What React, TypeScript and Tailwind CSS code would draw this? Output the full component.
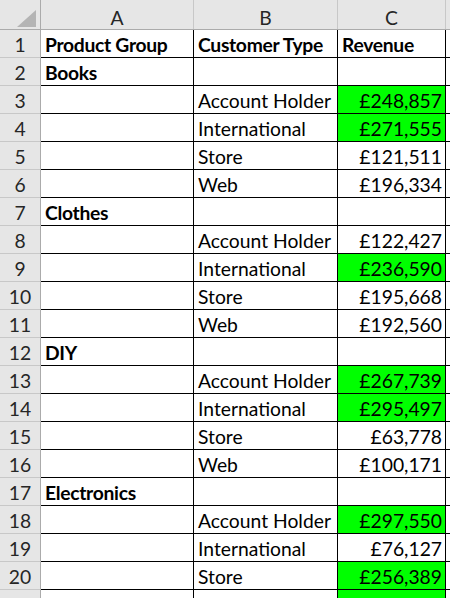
import React from "react";

type Row = {
  a?: string,
  b?: string,
  c?: string,
  hi?: boolean,
  bold?: boolean,
}

const rows: Row[] = [
  { a: "Product Group", b: "Customer Type", c: "Revenue", bold: true },
  { a: "Books", bold: true },
  { b: "Account Holder", c: "£248,857", hi: true },
  { b: "International", c: "£271,555", hi: true },
  { b: "Store", c: "£121,511" },
  { b: "Web", c: "£196,334" },
  { a: "Clothes", bold: true },
  { b: "Account Holder", c: "£122,427" },
  { b: "International", c: "£236,590", hi: true },
  { b: "Store", c: "£195,668" },
  { b: "Web", c: "£192,560" },
  { a: "DIY", bold: true },
  { b: "Account Holder", c: "£267,739", hi: true },
  { b: "International", c: "£295,497", hi: true },
  { b: "Store", c: "£63,778" },
  { b: "Web", c: "£100,171" },
  { a: "Electronics", bold: true },
  { b: "Account Holder", c: "£297,550", hi: true },
  { b: "International", c: "£76,127" },
  { b: "Store", c: "£256,389", hi: true },
  { b: "", c: "", hi: true },
];

const cols = "grid grid-cols-[41px_153px_144px_108px_1fr]";

export default function App() {
  return (
    <div className="w-[450px] h-[598px] overflow-hidden bg-white text-[19.3px] text-black" style={{ fontFamily: "Lato, 'Liberation Sans', sans-serif" }}>
      {/* column headers */}
      <div className={`${cols} h-[30px] bg-[#e6e6e6] border-b border-[#ababab] text-[#262626]`}>
        <div className="relative border-r border-[#ababab]">
          <svg className="absolute left-[17px] top-[10px]" width="19" height="17" viewBox="0 0 19 17">
            <polygon points="19,0 19,17 0,17" fill="#b4b4b4" />
          </svg>
        </div>
        <div className="flex items-end justify-center pb-[2px] border-r border-[#c8c8c8] leading-none h-full">A</div>
        <div className="flex items-end justify-center pb-[2px] border-r border-[#c8c8c8] leading-none h-full">B</div>
        <div className="flex items-end justify-center pb-[2px] border-r border-[#c8c8c8] leading-none h-full">C</div>
        <div />
      </div>

      {rows.map((r, i) => (
        <div key={i} className={`${cols} h-[28px]`}>
          <div className="flex items-end justify-center pb-[3px] bg-[#e6e6e6] border-r border-[#ababab] border-b border-b-[#c8c8c8] text-[#262626] leading-none">
            {i < 20 ? i + 1 : ""}
          </div>
          <div className={`flex items-end pl-[4px] pb-[3px] border-r border-b border-black leading-none whitespace-nowrap ${r.bold ? "font-bold tracking-[-0.3px]" : ""}`}>
            {r.a}
          </div>
          <div className={`flex items-end pl-[4px] pb-[3px] border-r border-b border-black leading-none whitespace-nowrap ${i === 0 ? "font-bold tracking-[-0.3px]" : ""}`}>
            {r.b}
          </div>
          <div className={`flex items-end justify-end pr-[3px] pb-[3px] border-r border-b border-black leading-none whitespace-nowrap ${r.hi ? "bg-[#00ff00]" : ""} ${i === 0 ? "font-bold tracking-[-0.3px] justify-start pl-[4px]" : ""}`}>
            {r.c}
          </div>
          <div className="border-b border-black" />
        </div>
      ))}
    </div>
  );
}
